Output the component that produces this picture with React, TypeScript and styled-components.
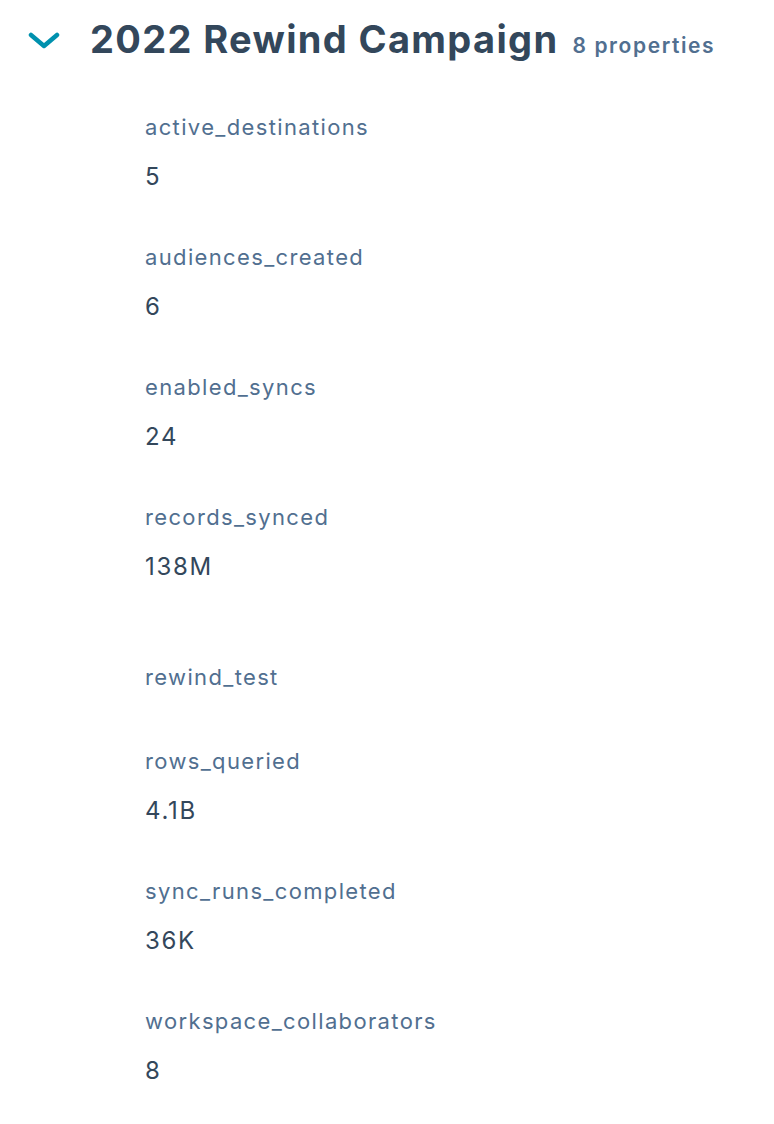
import React from "react";
import styled, { createGlobalStyle } from "styled-components";

const Global = createGlobalStyle`
  html, body { margin: 0; padding: 0; background: #ffffff; }
  body { font-family: "Inter", "Noto Sans", sans-serif; -webkit-font-smoothing: antialiased; }
`;

const Page = styled.div`
  width: 774px;
  min-height: 1124px;
  box-sizing: border-box;
  padding: 16px 0 0 28px;
`;

const Header = styled.div`
  display: flex;
  align-items: baseline;
  gap: 14px;
  height: 50px;
`;

const Toggle = styled.button`
  border: 0;
  background: none;
  padding: 0;
  width: 32px;
  height: 20px;
  margin-right: 16px;
  align-self: center;
  display: flex;
  align-items: center;
  cursor: pointer;
`;

const Title = styled.h2`
  margin: 0;
  font-size: 38px;
  font-weight: 700;
  color: #33475b;
  letter-spacing: 1.35px;
`;

const Count = styled.span`
  font-size: 21px;
  font-weight: 600;
  color: #516f90;
  letter-spacing: 1.6px;
`;

const List = styled.dl`
  margin: 46px 0 0 117px;
  display: flex;
  flex-direction: column;
`;

const Item = styled.div<{ $pad: number }>`
  display: flex;
  flex-direction: column;
  gap: 20px;
  padding-bottom: ${(p) => p.$pad}px;
`;

const Label = styled.dt`
  margin: 0;
  font-size: 22px;
  line-height: 30px;
  color: #516f90;
  letter-spacing: 1.35px;
`;

const Value = styled.dd`
  margin: 0;
  font-size: 24px;
  line-height: 30px;
  color: #33475b;
  letter-spacing: 1.7px;
`;

const items: { k: string; v?: string; pad: number }[] = [
  { k: "active_destinations", v: "5", pad: 50 },
  { k: "audiences_created", v: "6", pad: 50 },
  { k: "enabled_syncs", v: "24", pad: 50 },
  { k: "records_synced", v: "138M", pad: 80 },
  { k: "rewind_test", pad: 54 },
  { k: "rows_queried", v: "4.1B", pad: 50 },
  { k: "sync_runs_completed", v: "36K", pad: 50 },
  { k: "workspace_collaborators", v: "8", pad: 50 },
];

export default function App() {
  return (
    <>
      <Global />
      <Page>
        <Header>
          <Toggle aria-label="collapse">
            <svg width="32" height="20" viewBox="0 0 32 20">
              <path d="M3 4 L16 15 L29 4" fill="none" stroke="#0091ae" strokeWidth="4.5" strokeLinecap="round" strokeLinejoin="round" />
            </svg>
          </Toggle>
          <Title>2022 Rewind Campaign</Title>
          <Count>8 properties</Count>
        </Header>
        <List>
          {items.map((it) => (
            <Item key={it.k} $pad={it.pad}>
              <Label>{it.k}</Label>
              {it.v !== undefined && <Value>{it.v}</Value>}
            </Item>
          ))}
        </List>
      </Page>
    </>
  );
}
